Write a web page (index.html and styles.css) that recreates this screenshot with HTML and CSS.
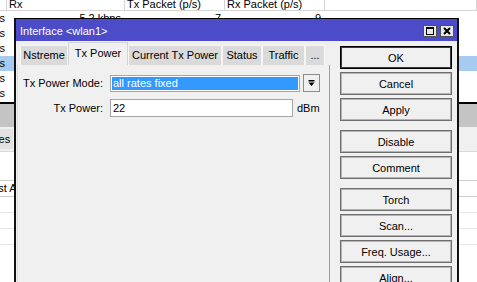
FILE: index.html
```html
<!DOCTYPE html>
<html lang="en">
<head>
    <meta charset="UTF-8">
    <title>Interface wlan1</title>
    <link rel="stylesheet" href="styles.css">
</head>
<body>
    <div class="backdrop">
        <div class="grid-hdr">
            <span class="c0"></span>
            <span class="c1">Rx</span>
            <span class="c2">Tx Packet (p/s)</span>
            <span class="c3">Rx Packet (p/s)</span>
            <span class="c4"></span>
        </div>
        <div class="grid-row"><span class="c0">kbps</span><span class="c1">5.2 kbps</span><span class="c2">7</span><span class="c3">9</span><span class="c4"></span></div>
        <div class="grid-row"><span class="c0">kbps</span><span class="c1"></span><span class="c2"></span><span class="c3"></span><span class="c4"></span></div>
        <div class="grid-row"><span class="c0">kbps</span><span class="c1"></span><span class="c2"></span><span class="c3"></span><span class="c4"></span></div>
        <div class="grid-row selected"><span class="c0">kbps</span><span class="c1"></span><span class="c2"></span><span class="c3"></span><span class="c4"></span></div>
        <div class="grid-row"><span class="c0">kbps</span><span class="c1"></span><span class="c2"></span><span class="c3"></span><span class="c4"></span></div>
        <div class="grid-row"><span class="c0">kbps</span><span class="c1"></span><span class="c2"></span><span class="c3"></span><span class="c4"></span></div>

        <div class="split"></div>
        <div class="tabband"><span class="btab">Properties</span></div>
        <div class="blank"></div>
        <div class="grid2-hdr"><span class="lastcol">Last Activity</span></div>
        <div class="grid2-row"></div>
        <div class="grid2-row"></div>
        <div class="grid2-row"></div>
    </div>

    <div class="dialog">
        <div class="titlebar">
            <span class="title">Interface &lt;wlan1&gt;</span>
            <span class="wbtns">
                <svg width="14" height="12" viewBox="0 0 14 12">
                    <rect x="0.5" y="0.5" width="13" height="11" fill="#e8e8e8" stroke="#505050"/>
                    <rect x="3.5" y="2.5" width="7" height="7" fill="none" stroke="#000"/>
                    <line x1="3" y1="3.5" x2="11" y2="3.5" stroke="#000"/>
                </svg>
                <svg width="14" height="12" viewBox="0 0 14 12">
                    <rect x="0.5" y="0.5" width="13" height="11" fill="#e8e8e8" stroke="#505050"/>
                    <path d="M4 3 L10 9 M10 3 L4 9" stroke="#000" stroke-width="2"/>
                </svg>
            </span>
        </div>
        <div class="dbody">
            <div class="main">
                <div class="tabs">
                    <span class="tab w-nstreme">Nstreme</span>
                    <span class="tab active w-txpower">Tx Power</span>
                    <span class="tab w-current">Current Tx Power</span>
                    <span class="tab w-status">Status</span>
                    <span class="tab w-traffic">Traffic</span>
                    <span class="tab w-more">...</span>
                </div>
                <div class="panel">
                    <div class="frow">
                        <label class="flabel" for="mode">Tx Power Mode:</label>
                        <div class="select" id="mode">all rates fixed</div>
                        <span class="ddbtn">
                            <svg width="9" height="7" viewBox="0 0 9 7">
                                <rect x="1.5" y="0" width="6" height="1.5" fill="#000"/>
                                <path d="M1.5 2.5 H7.5 L4.5 6 Z" fill="#000"/>
                            </svg>
                        </span>
                    </div>
                    <div class="frow">
                        <label class="flabel" for="power">Tx Power:</label>
                        <div class="input" id="power">22</div>
                        <span class="unit">dBm</span>
                    </div>
                </div>
            </div>
            <div class="actions">
                <div class="group">
                    <button class="btn default">OK</button>
                    <button class="btn">Cancel</button>
                    <button class="btn">Apply</button>
                </div>
                <div class="group">
                    <button class="btn">Disable</button>
                    <button class="btn">Comment</button>
                </div>
                <div class="group">
                    <button class="btn">Torch</button>
                    <button class="btn">Scan...</button>
                    <button class="btn">Freq. Usage...</button>
                    <button class="btn">Align...</button>
                </div>
            </div>
        </div>
    </div>
</body>
</html>
```

FILE: styles.css
```css
body {
    margin: 0;
    width: 477px;
    height: 282px;
    overflow: hidden;
    position: relative;
    background-color: #fff;
    font-family: "Liberation Sans", Arial, sans-serif;
    font-size: 11px;
    color: #000;
}

/* window behind the dialog */
.grid-hdr,
.grid-row {
    display: flex;
    white-space: nowrap;
}

.grid-hdr {
    height: 10px;
    border-bottom: 1px solid #d5d5d5;
    overflow: hidden;
}

.grid-hdr span {
    line-height: 10px;
    margin-top: -1px;
    padding-left: 2px;
    border-right: 1px solid #d5d5d5;
    box-sizing: border-box;
    height: 14px;
}

.grid-row {
    height: 15px;
    line-height: 15px;
}

.grid-row span {
    text-align: right;
    padding-right: 4px;
    box-sizing: border-box;
    overflow: hidden;
}

.grid-row.selected {
    background-color: #a6caf0;
}

.c0 { width: 7px; flex: none; }
.c1 { width: 118px; flex: none; }
.c2 { width: 100px; flex: none; }
.c3 { width: 100px; flex: none; }
.c4 { flex: 1; }

.grid-row .c0 {
    padding-right: 2px;
    direction: rtl;
}

.split {
    margin-top: 1px;
    height: 23px;
    border-top: 2px solid #000;
    background-color: #c4c4c4;
}

.tabband {
    height: 24px;
    background-color: #f0f0f0;
    border-bottom: 1px solid #d8d8d8;
    display: flex;
    align-items: center;
    overflow: hidden;
}

.btab {
    margin-left: -43px;
    padding: 4px 3px;
    background-color: #e2e2e2;
}

.blank {
    height: 28px;
}

.grid2-hdr {
    height: 15px;
    line-height: 15px;
    border-top: 1px solid #cfcfcf;
    border-bottom: 1px solid #cfcfcf;
    white-space: nowrap;
    overflow: hidden;
}

.lastcol {
    margin-left: -14px;
}

.grid2-row {
    height: 15px;
    border-bottom: 1px solid #e6e6e6;
}

/* dialog window */
.dialog {
    position: absolute;
    left: 14px;
    top: 18px;
    width: 445px;
    height: 264px;
    overflow: hidden;
    box-sizing: border-box;
    border-top: 1px solid #000;
    border-left: 2px solid #111;
    border-right: 2px solid #111;
    background-color: #f0f0f0;
    display: flex;
    flex-direction: column;
}

.titlebar {
    height: 22px;
    flex: none;
    background-color: #4c4cc8;
    color: #fff;
    display: flex;
    align-items: center;
    justify-content: space-between;
    padding: 0 3px 0 4px;
}

.title {
    font-size: 11px;
    margin-top: 1px;
}

.wbtns {
    display: flex;
    gap: 3px;
    margin-top: 2px;
}

.wbtns svg {
    display: block;
}

.dbody {
    flex: 1;
    display: flex;
    gap: 10px;
    padding: 0 5px 0 1px;
}

.main {
    width: 313px;
    display: flex;
    flex-direction: column;
}

.tabs {
    height: 24px;
    display: flex;
    align-items: flex-end;
    padding-left: 3px;
}

.tab {
    height: 20px;
    line-height: 19px;
    box-sizing: border-box;
    text-align: center;
    background-color: #dadada;
    border: 1px solid #f6f6f6;
    border-bottom: none;
    white-space: nowrap;
    overflow: hidden;
}

.tab.active {
    height: 23px;
    line-height: 21px;
    background-color: #f0f0f0;
    border-color: #d4d4d4;
}

.w-nstreme { width: 48px; }
.w-txpower { width: 60px; }
.w-current { width: 94px; }
.w-status { width: 40px; }
.w-traffic { width: 43px; }
.w-more { width: 20px; }

.panel {
    flex: 1;
    border-left: 1px solid #dcdcdc;
    border-right: 1px solid #a0a0a0;
    padding-top: 9px;
    display: flex;
    flex-direction: column;
    gap: 7px;
}

.frow {
    display: flex;
    align-items: center;
}

.flabel {
    width: 85px;
    text-align: right;
    flex: none;
}

.select,
.input {
    margin-left: 7px;
    box-sizing: border-box;
    border: 1px solid #a5a5a5;
    padding-left: 2px;
    white-space: nowrap;
}

.select {
    width: 190px;
    height: 17px;
    line-height: 15px;
    background-color: #3399ff;
    color: #fff;
    box-shadow: inset 0 0 0 1px #fff;
}

.ddbtn {
    margin-left: 3px;
    width: 17px;
    height: 18px;
    box-sizing: border-box;
    border: 1px solid #8c8c8c;
    display: flex;
    align-items: center;
    justify-content: center;
}

.ddbtn svg {
    display: block;
}

.input {
    width: 183px;
    height: 18px;
    line-height: 16px;
    background-color: #fff;
}

.unit {
    margin-left: 4px;
}

.actions {
    width: 112px;
    padding-top: 5px;
    display: flex;
    flex-direction: column;
    gap: 9px;
}

.group {
    display: flex;
    flex-direction: column;
    gap: 3px;
}

.btn {
    height: 23px;
    flex: none;
    width: 100%;
    padding: 0;
    font-family: "Liberation Sans", Arial, sans-serif;
    font-size: 11px;
    color: #000;
    background-color: #f0f0f0;
    border: 1px solid #6e6e6e;
    box-shadow: inset 0 0 0 1px #b4b4b4;
    border-radius: 0;
}

.btn.default {
    border-color: #000;
    box-shadow: inset 0 0 0 1px #3a3a3a;
}
```
